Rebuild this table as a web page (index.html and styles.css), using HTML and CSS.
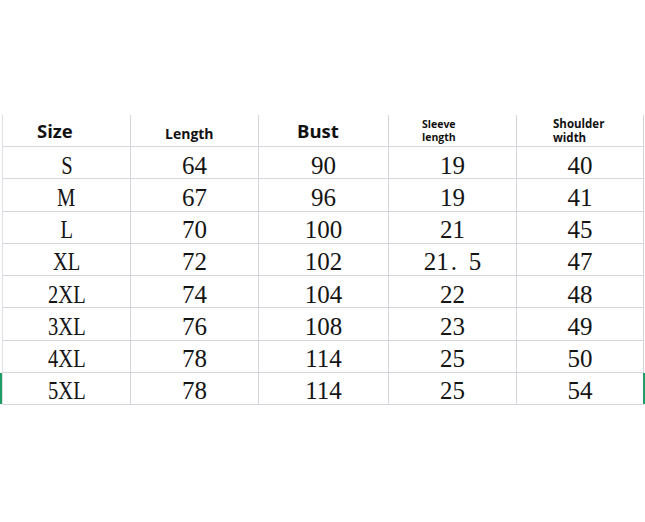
FILE: index.html
```html
<!DOCTYPE html>
<html>
<head>
<meta charset="utf-8">
<link rel="stylesheet" href="styles.css">
</head>
<body>
<div class="sheet">
  <div class="table">
    <div class="cell head h-size">Size</div>
    <div class="cell head h-length">Length</div>
    <div class="cell head h-bust">Bust</div>
    <div class="cell head h-sleeve">Sleeve<br>length</div>
    <div class="cell head h-shoulder">Shoulder<br>width</div>

    <div class="cell"><span class="narrow">S</span></div><div class="cell">64</div><div class="cell">90</div><div class="cell">19</div><div class="cell">40</div>
    <div class="cell"><span class="narrow">M</span></div><div class="cell">67</div><div class="cell">96</div><div class="cell">19</div><div class="cell">41</div>
    <div class="cell"><span class="narrow">L</span></div><div class="cell">70</div><div class="cell">100</div><div class="cell">21</div><div class="cell">45</div>
    <div class="cell"><span class="narrow">XL</span></div><div class="cell">72</div><div class="cell">102</div><div class="cell">21<span class="wdot">.</span>5</div><div class="cell">47</div>
    <div class="cell"><span class="narrow">2XL</span></div><div class="cell">74</div><div class="cell">104</div><div class="cell">22</div><div class="cell">48</div>
    <div class="cell"><span class="narrow">3XL</span></div><div class="cell">76</div><div class="cell">108</div><div class="cell">23</div><div class="cell">49</div>
    <div class="cell"><span class="narrow">4XL</span></div><div class="cell">78</div><div class="cell">114</div><div class="cell">25</div><div class="cell">50</div>
    <div class="cell sel-left"><span class="narrow">5XL</span></div><div class="cell">78</div><div class="cell">114</div><div class="cell">25</div><div class="cell sel-right">54</div>
  </div>
</div>
</body>
</html>
```

FILE: styles.css
```css
html, body {
  margin: 0;
  padding: 0;
  background: #ffffff;
}

.sheet {
  width: 645px;
  height: 522px;
  padding-top: 115px;
  padding-left: 2px;
  box-sizing: border-box;
}

.table {
  display: grid;
  grid-template-columns: 128px 128px 130px 128px 127px;
  grid-template-rows: 32px repeat(8, 32.25px);
  border-left: 1px solid #e0e0e6;
  width: 642px;
  position: relative;
}

.cell {
  box-sizing: border-box;
  border-right: 1px solid #d5d5dc;
  border-bottom: 1px solid #d5d5dc;
  display: flex;
  align-items: center;
  justify-content: center;
  padding-top: 5px;
  font-family: "Liberation Serif", "Times New Roman", serif;
  font-size: 25px;
  color: #141414;
  line-height: 1;
  position: relative;
}

.narrow {
  display: inline-block;
  transform: scaleX(0.82);
  transform-origin: center;
  white-space: nowrap;
}

.wdot {
  display: inline-block;
  width: 20px;
  text-align: left;
  padding-left: 2px;
  box-sizing: border-box;
}

.head {
  font-family: "Open Sans", "Noto Sans", sans-serif;
  font-weight: 700;
  color: #111;
  padding-top: 0;
  justify-content: flex-start;
}

.h-size {
  font-size: 18.5px;
  padding-left: 34px;
  padding-top: 1px;
}

.h-length {
  font-size: 14px;
  padding-left: 34px;
  padding-top: 6px;
}

.h-bust {
  font-size: 18.5px;
  padding-left: 38px;
  padding-top: 1px;
}

.h-sleeve {
  font-size: 10.5px;
  line-height: 13px;
  padding-left: 33px;
  padding-top: 0;
}

.h-shoulder {
  font-size: 11.5px;
  line-height: 14px;
  padding-left: 36px;
  padding-top: 0;
}

.sel-left::before {
  content: "";
  position: absolute;
  left: -3px;
  top: 0;
  bottom: 0;
  width: 2px;
  background: #1f9c63;
}

.sel-right::after {
  content: "";
  position: absolute;
  right: -2px;
  top: 0;
  bottom: 0;
  width: 2px;
  background: #1f9c63;
}
```
